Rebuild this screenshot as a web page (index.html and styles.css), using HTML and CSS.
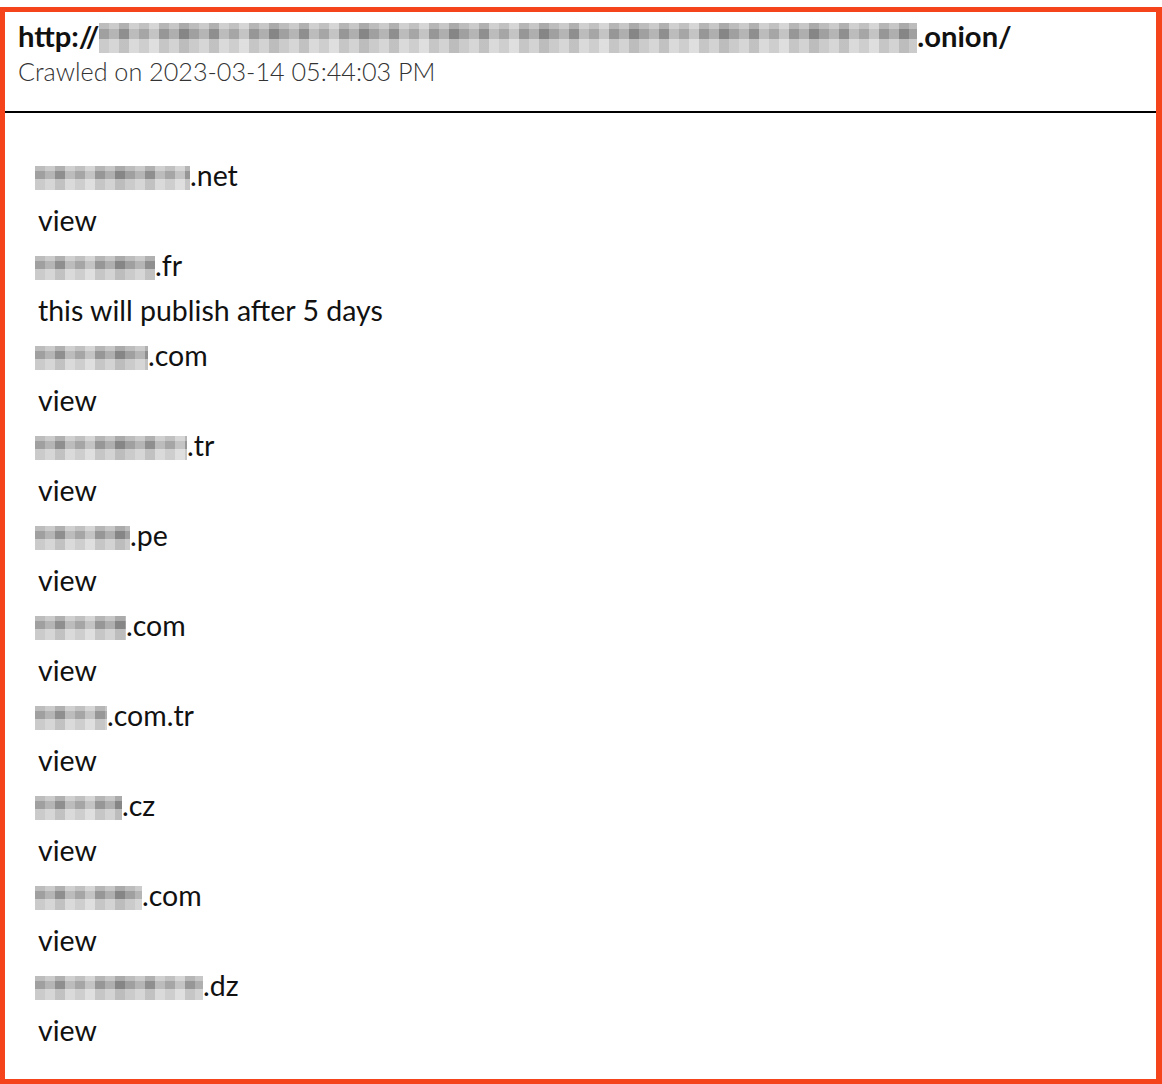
FILE: index.html
```html
<!DOCTYPE html>
<html lang="en">
<head>
  <meta charset="UTF-8">
  <title>Crawl Result</title>
  <link rel="stylesheet" href="styles.css">
</head>
<body>
  <div class="frame">
    <!-- Header -->
    <div class="head">
      <div class="url">http://<span class="blur big w818"></span>.onion/</div>
      <div class="crawled">Crawled on 2023-03-14 05:44:03 PM</div>
    </div>

    <!-- Leak list -->
    <ul class="list">
      <li><span class="blur w155"></span>.net</li>
      <li>view</li>
      <li><span class="blur w120"></span>.fr</li>
      <li>this will publish after 5 days</li>
      <li><span class="blur w113"></span>.com</li>
      <li>view</li>
      <li><span class="blur w152"></span>.tr</li>
      <li>view</li>
      <li><span class="blur w95"></span>.pe</li>
      <li>view</li>
      <li><span class="blur w91"></span>.com</li>
      <li>view</li>
      <li><span class="blur w72"></span>.com.tr</li>
      <li>view</li>
      <li><span class="blur w87"></span>.cz</li>
      <li>view</li>
      <li><span class="blur w107"></span>.com</li>
      <li>view</li>
      <li><span class="blur w168"></span>.dz</li>
      <li>view</li>
    </ul>
  </div>
</body>
</html>
```

FILE: styles.css
```css
/* General */
body {
  margin: 0;
  font-family: 'Lato', 'Noto Sans', sans-serif;
  color: #111;
  background: #fff;
}

.frame {
  margin-top: 7px;
  height: 1077px;
  box-sizing: border-box;
  border: 5px solid #f5431b;
  border-right-width: 6px;
}

/* Header */
.head {
  padding: 6px 0 0 13px;
  height: 101px;
  box-sizing: border-box;
  border-bottom: 2px solid #000;
}
.url {
  font-size: 29.2px;
  font-weight: 700;
  line-height: 36px;
}
.crawled {
  font-size: 25.2px;
  font-weight: 300;
  color: #333;
  line-height: 34px;
}

/* Pixelated redactions */
.blur {
  display: inline-block;
  height: 24px;
  vertical-align: -4px;
  background:
    linear-gradient(to bottom, rgba(255,255,255,0.3) 0 20%, rgba(255,255,255,0) 20% 55%, rgba(255,255,255,0.45) 55%),
    repeating-linear-gradient(90deg, #a0a0a0 0 10px, #b5b5b5 10px 20px, #8f8f8f 20px 30px, #bcbcbc 30px 40px, #a6a6a6 40px 50px, #c4c4c4 50px 60px, #979797 60px 70px, #afafaf 70px 80px, #868686 80px 90px);
}
.blur.big {
  height: 30px;
  vertical-align: -6px;
}
.w818 { width: 818px; }
.w168 { width: 168px; }
.w155 { width: 155px; }
.w152 { width: 152px; }
.w120 { width: 120px; }
.w113 { width: 113px; }
.w107 { width: 107px; }
.w95 { width: 95px; }
.w91 { width: 91px; }
.w87 { width: 87px; }
.w72 { width: 72px; }

/* List */
.list {
  list-style: none;
  margin: 0;
  padding: 40px 0 0 30px;
}
.list li {
  font-size: 28.5px;
  line-height: 45px;
  height: 45px;
  padding-left: 3px;
}
.list li .blur {
  margin-left: -3px;
}
```
